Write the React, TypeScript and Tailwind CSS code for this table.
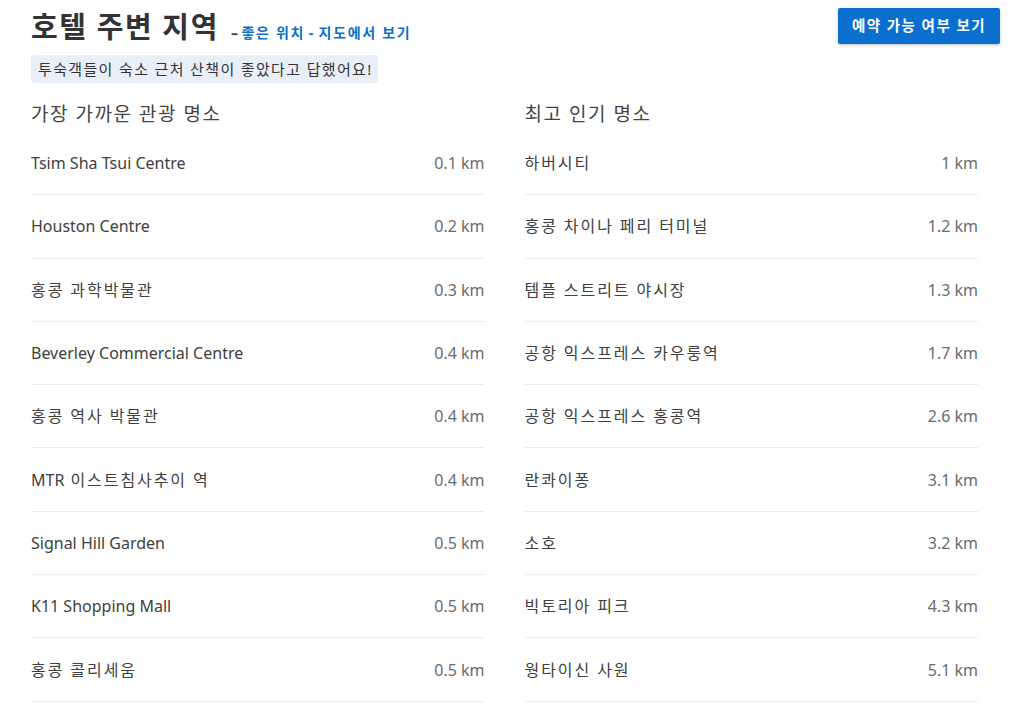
const nearby = [
  { name: "Tsim Sha Tsui Centre", dist: "0.1 km" },
  { name: "Houston Centre", dist: "0.2 km" },
  { name: "홍콩 과학박물관", dist: "0.3 km" },
  { name: "Beverley Commercial Centre", dist: "0.4 km" },
  { name: "홍콩 역사 박물관", dist: "0.4 km" },
  { name: "MTR 이스트침사추이 역", dist: "0.4 km" },
  { name: "Signal Hill Garden", dist: "0.5 km" },
  { name: "K11 Shopping Mall", dist: "0.5 km" },
  { name: "홍콩 콜리세움", dist: "0.5 km" },
];

const popular = [
  { name: "하버시티", dist: "1 km" },
  { name: "홍콩 차이나 페리 터미널", dist: "1.2 km" },
  { name: "템플 스트리트 야시장", dist: "1.3 km" },
  { name: "공항 익스프레스 카우룽역", dist: "1.7 km" },
  { name: "공항 익스프레스 홍콩역", dist: "2.6 km" },
  { name: "란콰이퐁", dist: "3.1 km" },
  { name: "소호", dist: "3.2 km" },
  { name: "빅토리아 피크", dist: "4.3 km" },
  { name: "웡타이신 사원", dist: "5.1 km" },
];

// Hangul runs get a bit of letter spacing so they take the width of the original font
function Ko({ text, className }: { text: string; className: string }) {
  const parts = text.split(/([\uAC00-\uD7A3 ]*[\uAC00-\uD7A3])/);
  return (
    <>
      {parts.map((part, i) =>
        /[\uAC00-\uD7A3]/.test(part) ? (
          <span key={i} className={className}>
            {part}
          </span>
        ) : (
          <span key={i}>{part}</span>
        )
      )}
    </>
  );
}

function PlaceList({ title, items }: { title: string; items: { name: string; dist: string }[] }) {
  return (
    <section className="flex flex-col">
      <h3 className="h-[36px] text-[19px] leading-[36px] text-[#444]">
        <Ko text={title} className="tracking-[0.08em]" />
      </h3>
      <ul>
        {items.map((p) => (
          <li
            key={p.name}
            className="flex h-[63.3px] items-center justify-between border-b border-[#ebebeb] text-[16px]"
          >
            <span className="text-[#404040]">
              <Ko text={p.name} className="tracking-[0.12em]" />
            </span>
            <span className="text-[#6b6b6b]">{p.dist}</span>
          </li>
        ))}
      </ul>
    </section>
  );
}

export default function App() {
  return (
    <div
      className="min-h-[717px] bg-white pl-[31px] pr-[24px] pt-[8px]"
      style={{ fontFamily: '"Noto Sans", "Noto Sans CJK KR", sans-serif' }}
    >
      <div className="flex items-start justify-between">
        <div>
          <div className="flex items-baseline gap-[12px]">
            <h2 className="text-[29px] font-bold leading-[38px] text-[#333]">
              <Ko text="호텔 주변 지역" className="tracking-[0.055em]" />
            </h2>
            <span className="text-[14px] font-bold text-[#0b6fc8]">
              <span className="text-[#333]">–</span>{" "}
              <Ko text="좋은 위치 - 지도에서 보기" className="tracking-[0.12em]" />
            </span>
          </div>
          <div className="mt-[9px] inline-block rounded-[3px] bg-[#e8eff9] px-[7px] py-[3px] text-[15px] leading-[22px] text-[#333]">
            <Ko text="투숙객들이 숙소 근처 산책이 좋았다고 답했어요!" className="tracking-[0.09em]" />
          </div>
        </div>
        <button className="h-[36px] w-[162px] rounded-[2px] bg-[#0b6fcf] text-[14.5px] font-bold text-white shadow-[0_1px_3px_rgba(0,0,0,0.25)]">
          <Ko text="예약 가능 여부 보기" className="tracking-[0.1em]" />
        </button>
      </div>
      <div className="mt-[13px] grid w-[947px] grid-cols-2 gap-x-[40px]">
        <PlaceList title="가장 가까운 관광 명소" items={nearby} />
        <PlaceList title="최고 인기 명소" items={popular} />
      </div>
    </div>
  );
}
